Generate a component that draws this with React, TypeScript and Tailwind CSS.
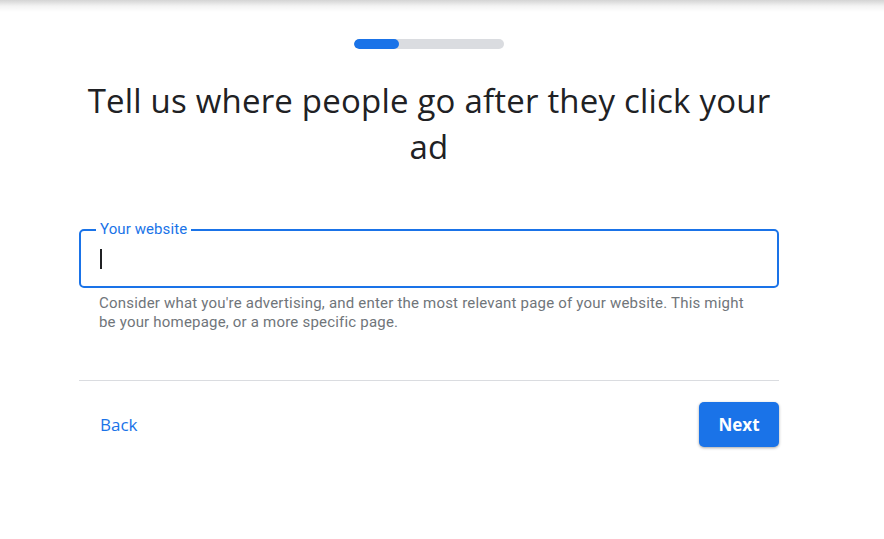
import React from 'react';

const App: React.FC = () => {
  return (
    <div className="relative w-[884px] h-[539px] bg-white overflow-hidden font-['Roboto',sans-serif]">
      <div className="absolute top-0 left-0 right-0 h-[12px] bg-gradient-to-b from-[#d4d4d4] via-[#f3f3f3] to-white" />
      <div className="w-[700px] ml-[79px] pt-[39px] flex flex-col">
        <div className="self-center w-[150px] h-[10px] rounded-full bg-[#dadce0] overflow-hidden">
          <div className="w-[45px] h-full rounded-full bg-[#1a73e8]" />
        </div>
        <h1 className="self-center w-[692px] mt-[29px] text-center text-[33px] leading-[46px] text-[#202124] font-['Open_Sans',sans-serif] tracking-[0.2px]">
          Tell us where people go after they click your ad
        </h1>
        <div className="mt-[59px] relative">
          <span className="absolute left-[17px] -top-[8px] px-[4px] bg-white text-[15px] leading-[17px] tracking-[0.1px] text-[#1a73e8]">
            Your website
          </span>
          <div className="h-[59px] border-2 border-[#1a73e8] rounded-[5px] flex items-center pl-[19px]">
            <div className="w-[2px] h-[20px] bg-[#202124]" />
          </div>
        </div>
        <p className="mt-[6px] px-[20px] text-[15px] leading-[19px] tracking-[0.2px] text-[#70757a]">
          Consider what you're advertising, and enter the most relevant page of your website. This might be your homepage, or a more specific page.
        </p>
        <div className="mt-[48px] h-px bg-[#dadce0]" />
        <div className="mt-[21px] flex items-center justify-between">
          <button className="ml-[21px] text-[17px] font-medium text-[#1a73e8] font-['Open_Sans',sans-serif]">Back</button>
          <button className="w-[80px] h-[45px] rounded-[5px] bg-[#1a73e8] text-white text-[17px] font-bold shadow-[0_1px_3px_rgba(0,0,0,0.35)] font-['Open_Sans',sans-serif]">
            Next
          </button>
        </div>
      </div>
    </div>
  );
};

export default App;
